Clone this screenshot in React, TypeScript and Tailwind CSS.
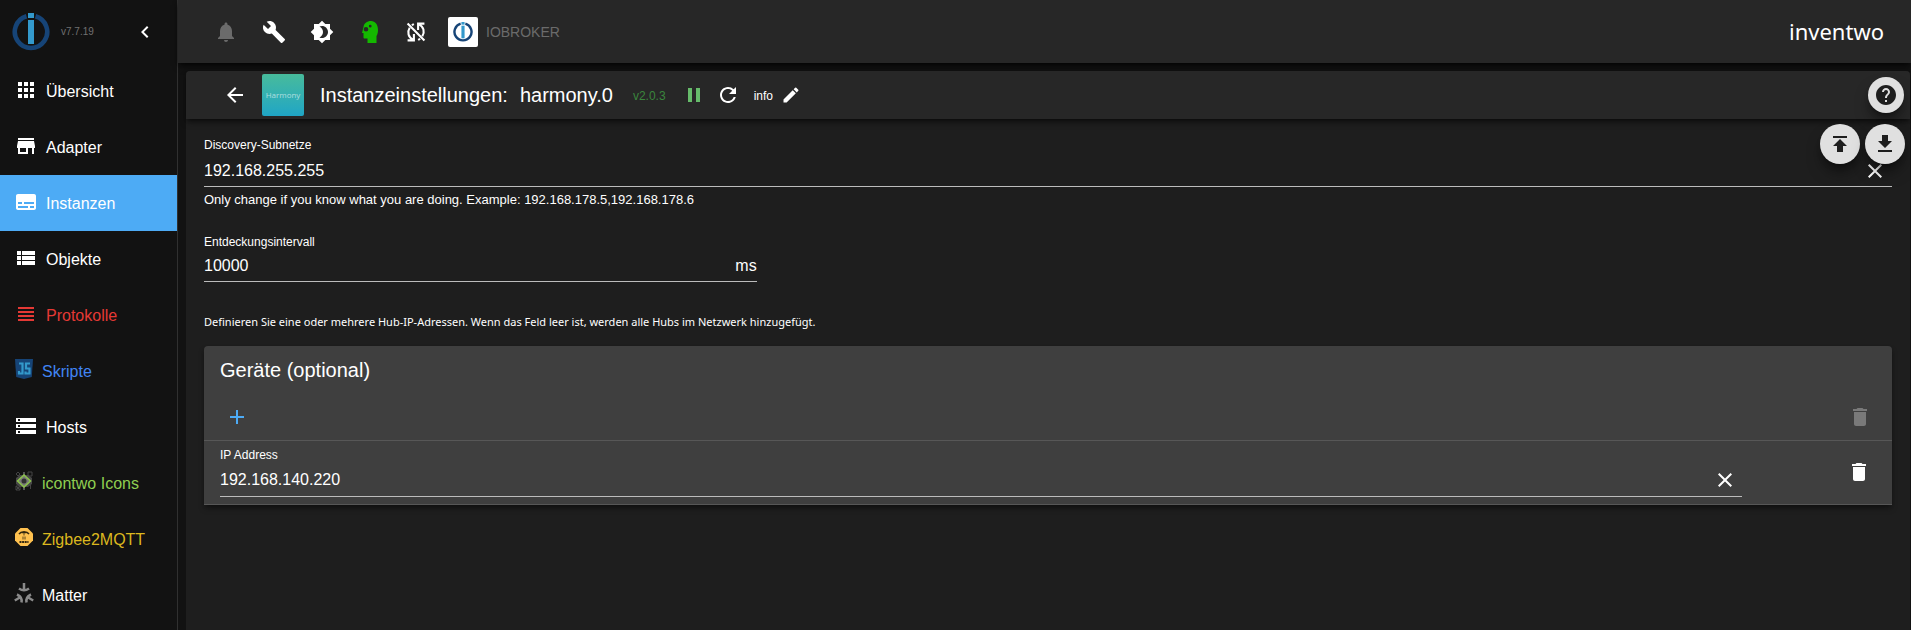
import { useState } from 'react';
import type { IconType } from 'react-icons';
import {
  MdAdd,
  MdApps,
  MdArrowBack,
  MdBrightness4,
  MdBuild,
  MdChevronLeft,
  MdClose,
  MdCreate,
  MdDelete,
  MdFileDownload,
  MdHelp,
  MdNotifications,
  MdPause,
  MdPublish,
  MdRefresh,
  MdStorage,
  MdStore,
  MdSubtitles,
  MdViewHeadline,
  MdViewList,
} from 'react-icons/md';

type IconProps = { className?: string };

function Logo({ className }: IconProps) {
  return (
    <svg viewBox="0 0 38 38" className={className} aria-hidden="true">
      <path d="M14.5 3.2A16.2 16.2 0 1 0 23.5 3.2" fill="none" stroke="#164477" strokeWidth="4.6" />
      <rect x="16" y="0" width="6" height="5" fill="#3399cc" />
      <rect x="16" y="7" width="6" height="24" fill="#3399cc" />
    </svg>
  );
}

function ExpertIcon({ className }: IconProps) {
  return (
    <svg viewBox="0 0 24 24" className={className} fill="currentColor" aria-hidden="true">
      <path
        fillRule="evenodd"
        d="M13 1C8.800 1 6 3.500 5.500 7L4 13h1.500v4.500c0 .6.4 1 1 1H9.500V23h9v-7c1-1.700 1.500-3.500 1.500-6C20 4.500 17.300 1 13 1zM8 7a2.300 2.300 0 1 1 0 4.600A2.300 2.300 0 0 1 8 7zM12.200 4.800a1.400 1.400 0 1 1 0 2.800 1.400 1.400 0 0 1 0-2.800z"
      />
    </svg>
  );
}

function SyncOffIcon({ className }: IconProps) {
  return (
    <svg viewBox="2.5 2.5 19 19" className={className} fill="none" stroke="currentColor" strokeWidth="2" aria-hidden="true">
      <path d="M4 4l16 16M4 20h6v-6M9.500 19.500C4.500 17 3.500 12 6 8M20 4h-6v6M14.500 4.500c5 2.500 6 7.500 3.500 11.500M10 4.500L8 5.500M14 19.500l2-1" />
    </svg>
  );
}

function ScriptIcon({ className }: IconProps) {
  return (
    <svg viewBox="0 0 18 20" className={className} aria-hidden="true">
      <path d="M0 0h18l-1.200 18L9 20l-7.800-2z" fill="#164477" />
      <path d="M4 4.500h3.500v10H4v-2.500M15 4.500h-4V9.500h3.500v5h-4v-2" fill="none" stroke="#3399cc" strokeWidth="2.200" />
    </svg>
  );
}

function IcontwoIcon({ className }: IconProps) {
  return (
    <svg viewBox="0 0 18 20" className={className} fill="none" aria-hidden="true">
      <path d="M1 3l2-2 2 2-2 2zM13 1h4v4h-4zM1 15h4v4H1zM1 15l4 4M5 15l-4 4M15.500 14v4" stroke="#444" />
      <path d="M5 4h8l4 3v6l-4 3H5l-4-3V7z" fill="#484848" />
      <path d="M9 1v3M9 16v3" stroke="#555" strokeWidth="2" />
      <path d="M9 4l6.500 6L9 16l-6.500-6z" fill="#777" stroke="#8cc34b" strokeWidth="1.500" />
      <circle cx="9" cy="10" r="2.500" fill="#303030" />
    </svg>
  );
}

function ZigbeeIcon({ className }: IconProps) {
  return (
    <svg viewBox="-1 -1 20 20" className={className} fill="none" aria-hidden="true">
      <path d="M5.500 0h7L18 5.500v7L12.500 18h-7L0 12.500v-7z" fill="#ffc14f" />
      <path d="M4 6C6 3 12 3 14 6M6.500 4.500h5" stroke="#33270f" strokeWidth="1.500" />
      <path d="M9 5v2.500M8 8.500v3M10 8.500v3" stroke="#5d4519" />
      <path d="M4.500 14h9" stroke="#33270f" strokeWidth="2" strokeDasharray="2 .6" />
    </svg>
  );
}

function MatterIcon({ className }: IconProps) {
  return (
    <svg viewBox="0 0 20 20" className={className} fill="none" stroke="#8a8a8a" strokeWidth="2.500" aria-hidden="true">
      <path d="M10 0v8M5 5.500q5 3.500 10 0M.8 17.500L7.500 13.500M3 11.500q5.500 2.500 4.500 8M19.200 17.500l-6.700-4M17 11.500q-5.500 2.500-4.500 8" />
    </svg>
  );
}

type MenuItem = {
  label: string;
  icon: IconType | ((props: IconProps) => React.JSX.Element);
  color?: string;
  custom?: boolean;
};

const menu: MenuItem[] = [
  { label: 'Übersicht', icon: MdApps },
  { label: 'Adapter', icon: MdStore },
  { label: 'Instanzen', icon: MdSubtitles },
  { label: 'Objekte', icon: MdViewList },
  { label: 'Protokolle', icon: MdViewHeadline, color: 'text-[#e53935]' },
  { label: 'Skripte', icon: ScriptIcon, color: 'text-[#4185f4]', custom: true },
  { label: 'Hosts', icon: MdStorage },
  { label: 'icontwo Icons', icon: IcontwoIcon, color: 'text-[#8fce51]', custom: true },
  { label: 'Zigbee2MQTT', icon: ZigbeeIcon, color: 'text-[#dcb81f]', custom: true },
  { label: 'Matter', icon: MatterIcon, custom: true },
];

function Sidebar() {
  const [active, setActive] = useState('Instanzen');

  return (
    <aside className="w-[178px] shrink-0 border-r border-[#303030] bg-[#121212]">
      <div className="flex h-[63px] items-center pl-3">
        <Logo className="size-[38px]" />
        <span className="ml-[11px] text-[10px] text-[#707070]">v7.7.19</span>
        <button aria-label="Menü schließen" className="ml-auto mr-5">
          <MdChevronLeft className="size-6" />
        </button>
      </div>
      <nav>
        {menu.map(({ label, icon: Icon, color, custom }) => (
          <a
            key={label}
            href="#"
            onClick={() => setActive(label)}
            className={`flex h-14 items-center gap-2 pl-3.5 ${color ?? 'text-white'} ${active === label ? 'bg-[#4dabf5]' : ''}`}
          >
            <Icon className={custom ? 'mb-1 size-5' : 'mb-0.5 size-6'} />
            <span className="pt-0.5 text-base">{label}</span>
          </a>
        ))}
      </nav>
    </aside>
  );
}

function Toolbar() {
  return (
    <header className="flex h-[63px] shrink-0 items-center bg-[#272727] pl-9 pr-[27px] shadow-md shadow-black/60">
      <div className="flex items-center gap-6">
        <button aria-label="Benachrichtigungen" className="text-[#6b6b6b]" disabled>
          <MdNotifications className="size-6" />
        </button>
        <button aria-label="Systemeinstellungen">
          <MdBuild className="size-6" />
        </button>
        <button aria-label="Farbschema">
          <MdBrightness4 className="size-6" />
        </button>
        <button aria-label="Expertenmodus" className="text-[#14b800]">
          <ExpertIcon className="size-6" />
        </button>
        <button aria-label="Synchronisieren">
          <SyncOffIcon className="size-5" />
        </button>
      </div>
      <button className="ml-[22px] flex items-center gap-2 text-sm text-[#6b6b6b]" disabled>
        <span className="flex size-[30px] items-center justify-center rounded-xs bg-white">
          <Logo className="size-5" />
        </span>
        IOBROKER
      </button>
      <span className="ml-auto font-['Noto_Sans',sans-serif] text-[22px]">inventwo</span>
    </header>
  );
}

type FieldProps = {
  id: string;
  label: string;
  value: string;
  onChange: (value: string) => void;
  unit?: string;
};

function Field({ id, label, value, onChange, unit }: FieldProps) {
  return (
    <div>
      <label htmlFor={id} className="block text-xs leading-4">
        {label}
      </label>
      <div className={`flex items-center border-b border-[#bcbcbc] ${unit ? 'h-8' : 'h-[34px] pt-0.5'}`}>
        <input
          id={id}
          value={value}
          onChange={(e) => onChange(e.target.value)}
          className="min-w-0 flex-1 bg-transparent text-base outline-none"
        />
        {unit ? (
          <span>{unit}</span>
        ) : (
          <button aria-label={`${label} leeren`} className="mr-[5px]" onClick={() => onChange('')}>
            <MdClose className="size-6" />
          </button>
        )}
      </div>
    </div>
  );
}

function DeviceTable() {
  const [address, setAddress] = useState('192.168.140.220');

  return (
    <section className="mt-4 rounded-t border-b border-[#575757] bg-[#3f3f3f] shadow-md shadow-black/40">
      <h2 className="px-4 pt-2 text-xl leading-8">Geräte (optional)</h2>
      <table className="w-full table-fixed">
        <thead>
          <tr className="h-[54px] border-b border-[#575757]">
            <th className="pl-[21px] pt-2 text-left">
              <button aria-label="Hinzufügen" className="block text-[#4dabf5]">
                <MdAdd className="size-6" />
              </button>
            </th>
            <th className="w-[150px] pr-5 pt-2">
              <button aria-label="Alle löschen" className="ml-auto block text-[#797979]" disabled>
                <MdDelete className="size-6" />
              </button>
            </th>
          </tr>
        </thead>
        <tbody>
          <tr>
            <td className="pb-[7px] pl-4 pt-1.5">
              <Field id="ip" label="IP Address" value={address} onChange={setAddress} />
            </td>
            <td className="pr-[21px]">
              <button aria-label="Löschen" className="ml-auto block">
                <MdDelete className="size-6" />
              </button>
            </td>
          </tr>
        </tbody>
      </table>
    </section>
  );
}

function InstanceSettings() {
  const [subnet, setSubnet] = useState('192.168.255.255');
  const [interval, setInterval] = useState('10000');

  return (
    <main className="relative ml-2 mr-px mt-2 flex-1 rounded-t bg-[#1e1e1e]">
      <div className="flex h-12 items-center rounded-t bg-[#272727] pl-[37px] pr-1.5 shadow-md shadow-black/50">
        <button aria-label="Zurück">
          <MdArrowBack className="size-6" />
        </button>
        <div className="ml-[15px] flex size-[42px] items-center justify-center rounded-xs bg-linear-to-b from-[#47bb9b] to-[#1fa5c5] font-['Open_Sans',sans-serif] text-[8px] text-white/60">
          Harmony
        </div>
        <h1 className="ml-4 flex gap-3 text-xl">
          <span>Instanzeinstellungen:</span>
          <span>harmony.0</span>
        </h1>
        <span className="ml-5 pt-0.5 text-xs text-[#3a853d]">v2.0.3</span>
        <button aria-label="Pause" className="ml-4 text-[#66bb6a]">
          <MdPause className="size-6" />
        </button>
        <button aria-label="Neu starten" className="ml-2.5">
          <MdRefresh className="size-6" />
        </button>
        <span className="ml-3.5 pt-0.5 text-xs">info</span>
        <button aria-label="Bearbeiten" className="ml-2">
          <MdCreate className="size-5" />
        </button>
        <button
          aria-label="Hilfe"
          className="ml-auto flex size-9 items-center justify-center rounded-full bg-[#e0e0e0] text-[#1e1e1e] shadow-lg shadow-black/50"
        >
          <MdHelp className="size-6" />
        </button>
      </div>

      <div className="absolute right-[5px] top-[53px] flex gap-[5px] text-[#1e1e1e]">
        <button
          aria-label="Importieren"
          className="flex size-10 items-center justify-center rounded-full bg-[#e0e0e0] shadow-lg shadow-black/50"
        >
          <MdPublish className="size-6" />
        </button>
        <button
          aria-label="Exportieren"
          className="flex size-10 items-center justify-center rounded-full bg-[#e0e0e0] shadow-lg shadow-black/50"
        >
          <MdFileDownload className="size-6" />
        </button>
      </div>

      <div className="px-[18px] pt-[18px]">
        <Field id="subnet" label="Discovery-Subnetze" value={subnet} onChange={setSubnet} />
        <p className="mt-[5px] text-[13px] leading-4">
          Only change if you know what you are doing. Example: 192.168.178.5,192.168.178.6
        </p>
        <div className="mt-[26px] w-1/3 pr-2.5">
          <Field id="interval" label="Entdeckungsintervall" value={interval} onChange={setInterval} unit="ms" />
        </div>
        <p className="mt-8 font-['Noto_Sans',sans-serif] text-[11px] leading-4">
          Definieren Sie eine oder mehrere Hub-IP-Adressen. Wenn das Feld leer ist, werden alle Hubs im Netzwerk hinzugefügt.
        </p>
        <DeviceTable />
      </div>
    </main>
  );
}

export default function App() {
  return (
    <div className="flex min-h-screen bg-[#121212] font-['Liberation_Sans',Arial,sans-serif] text-white">
      <Sidebar />
      <div className="flex min-w-0 flex-1 flex-col">
        <Toolbar />
        <InstanceSettings />
      </div>
    </div>
  );
}
